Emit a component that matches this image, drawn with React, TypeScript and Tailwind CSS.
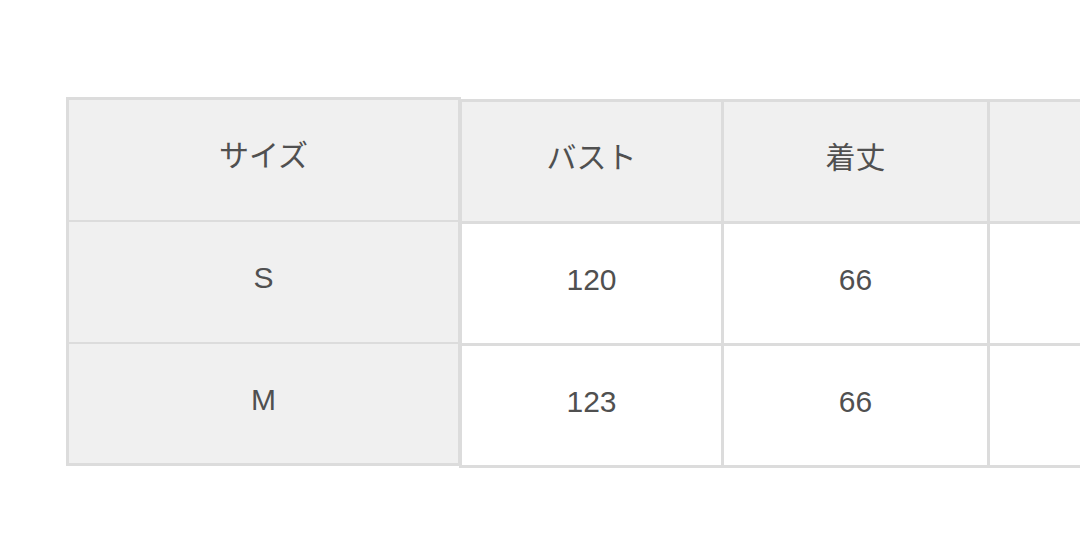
import React from "react";

const font = { fontFamily: '"Liberation Sans", "Noto Sans CJK JP", sans-serif' };

export default function App() {
  const left = ["サイズ", "S", "M"];
  const right = [
    ["バスト", "着丈", ""],
    ["120", "66", ""],
    ["123", "66", ""],
  ];
  return (
    <div className="w-[1080px] h-[533px] bg-white overflow-hidden" style={font}>
      <div className="flex items-start pt-[97px] pl-[66px]">
        <table className="border-collapse shrink-0 border-[3px] border-[#dcdcdc] bg-[#f0f0f0]">
          <tbody>
            {left.map((t, i) => (
              <tr key={i}>
                <td className="w-[392px] h-[122px] border-2 border-[#dcdcdc] text-center align-middle text-[30px] text-[#505050] p-0 pb-[8px]">
                  {t}
                </td>
              </tr>
            ))}
          </tbody>
        </table>
        <table className="border-collapse shrink-0 mt-[2px] -ml-[2px] border-[3px] border-[#dcdcdc]">
          <tbody>
            {right.map((row, i) => (
              <tr key={i} className={i === 0 ? "bg-[#f0f0f0]" : "bg-white"}>
                {row.map((c, j) => (
                  <td
                    key={j}
                    className={`h-[122px] border-[3px] border-[#dcdcdc] text-center align-middle text-[30px] text-[#505050] p-0 pb-[8px] ${
                      j === 0 ? "w-[262px]" : j === 1 ? "w-[266px]" : "w-[266px]"
                    }`}
                  >
                    {c}
                  </td>
                ))}
              </tr>
            ))}
          </tbody>
        </table>
      </div>
    </div>
  );
}
